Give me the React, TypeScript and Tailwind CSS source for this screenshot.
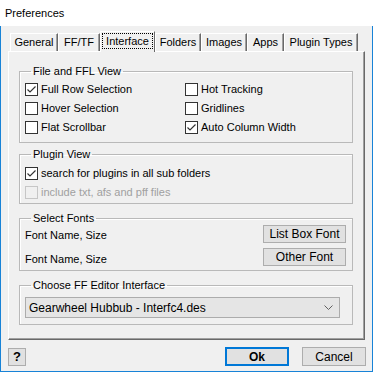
import type { ReactNode } from 'react';

const tabs = [
  { label: 'General', w: 'w-[48px]' },
  { label: 'FF/TF', w: 'w-[42px]' },
  { label: 'Interface', w: 'w-[55px]', active: true },
  { label: 'Folders', w: 'w-[46px]' },
  { label: 'Images', w: 'w-[46px]' },
  { label: 'Apps', w: 'w-[37px]' },
  { label: 'Plugin Types', w: 'w-[74px]' },
];

function Check({ label, checked, disabled }: { label: string; checked?: boolean; disabled?: boolean }) {
  return (
    <div className="flex h-[19px] items-center gap-[3px]">
      <span
        className={`flex h-[13px] w-[13px] shrink-0 items-center justify-center border ${
          disabled ? 'border-[#c6c6c6] bg-[#f0f0f0]' : 'border-[#333] bg-white'
        }`}
      >
        {checked && (
          <svg width="11" height="11" viewBox="0 0 11 11">
            <polyline points="1.5,5.5 4,8 9.5,2.5" fill="none" stroke="#333" strokeWidth="1.2" />
          </svg>
        )}
      </span>
      <span className={disabled ? 'text-[#a0a0a0]' : ''}>{label}</span>
    </div>
  );
}

function Group({ title, className, children }: { title: string; className?: string; children: ReactNode }) {
  return (
    <fieldset className={`border border-[#b9b9b9] shadow-[inset_1px_1px_0_#fff] ${className ?? ''}`}>
      <legend className="ml-[6px] px-[2px] leading-[13px]">{title}</legend>
      {children}
    </fieldset>
  );
}

function Btn({ children, className }: { children: ReactNode; className?: string }) {
  return (
    <div className={`flex h-[18px] items-center justify-center border border-[#adadad] bg-[#e1e1e1] ${className ?? ''}`}>
      {children}
    </div>
  );
}

export default function App() {
  return (
    <div className="flex h-[372px] w-[373px] flex-col overflow-hidden bg-[#f0f0f0] font-['Liberation_Sans',Arial,sans-serif] text-[11px] text-black">
      <div className="flex h-[26px] shrink-0 items-center bg-white pl-[5px] text-[11px]">Preferences</div>
      <div className="relative flex flex-1 flex-col border-x border-b border-[#1883d7] px-[7px]">
        {/* tab strip */}
        <div className="relative z-10 mt-[7px] flex h-[18px] items-end pl-[2px]">
          {tabs.map((t) =>
            t.active ? (
              <div
                key={t.label}
                className={`${t.w} -mb-px flex h-[21px] flex-col items-center border-l border-t border-r border-l-white border-t-white border-r-[#696969] bg-[#f0f0f0] pt-px`}
              >
                <span className="flex h-[16px] w-[51px] items-center justify-center border border-dotted border-black">
                  {t.label}
                </span>
              </div>
            ) : (
              <div
                key={t.label}
                className={`${t.w} flex h-[18px] items-center justify-center border-l border-t border-r border-l-white border-t-white border-r-[#696969] shadow-[inset_-1px_0_0_#a0a0a0]`}
              >
                {t.label}
              </div>
            ),
          )}
        </div>

        {/* tab panel */}
        <div className="flex h-[289px] flex-col border border-l-white border-t-white border-r-[#696969] border-b-[#696969] pl-[10px] pr-[11px] pt-[13px] shadow-[inset_-1px_-1px_0_#a0a0a0]">
          <Group title="File and FFL View" className="pb-[5px] pl-[5px] pt-[2px]">
            <div className="grid grid-cols-[160px_1fr]">
              <Check label="Full Row Selection" checked />
              <Check label="Hot Tracking" />
              <Check label="Hover Selection" />
              <Check label="Gridlines" />
              <Check label="Flat Scrollbar" />
              <Check label="Auto Column Width" checked />
            </div>
          </Group>

          <Group title="Plugin View" className="mt-[5px] pb-[1px] pl-[5px] pt-[3px]">
            <Check label="search for plugins in all sub folders" checked />
            <Check label="include txt, afs and pff files" disabled />
          </Group>

          <Group title="Select Fonts" className="mt-[8px] pb-[3px] pl-[5px] pr-[6px]">
            <div className="-mt-px flex flex-col gap-[4px]">
              <div className="flex items-center justify-between">
                <span className="pt-[3px]">Font Name, Size</span>
                <Btn className="w-[83px] text-[12px]">List Box Font</Btn>
              </div>
              <div className="flex items-center justify-between">
                <span className="pt-[3px]">Font Name, Size</span>
                <Btn className="w-[83px] text-[12px]">Other Font</Btn>
              </div>
            </div>
          </Group>

          <Group title="Choose FF Editor Interface" className="mt-[8px] pb-[6px] pl-[5px] pt-[5px]">
            <div className="flex h-[21px] w-[315px] items-center justify-between border border-[#acacac] bg-[#e5e5e5] pl-[3px] pr-[6px] text-[12px]">
              <span>Gearwheel Hubbub - Interfc4.des</span>
              <svg width="9" height="6" viewBox="0 0 9 6">
                <polyline points="0.5,0.5 4.5,4.5 8.5,0.5" fill="none" stroke="#606060" strokeWidth="1" />
              </svg>
            </div>
          </Group>
        </div>

        {/* footer */}
        <div className="mt-[7px] flex items-center justify-between">
          <Btn className="w-[18px] text-[13px] font-bold">?</Btn>
          <div className="-mr-px flex items-center gap-[13px]">
            <div className="flex h-[19px] w-[64px] items-center justify-center border-2 border-[#0078d7] bg-[#e1e1e1] text-[12px] font-bold">
              Ok
            </div>
            <Btn className="h-[19px] w-[64px] text-[12px]">Cancel</Btn>
          </div>
        </div>
      </div>
    </div>
  );
}
